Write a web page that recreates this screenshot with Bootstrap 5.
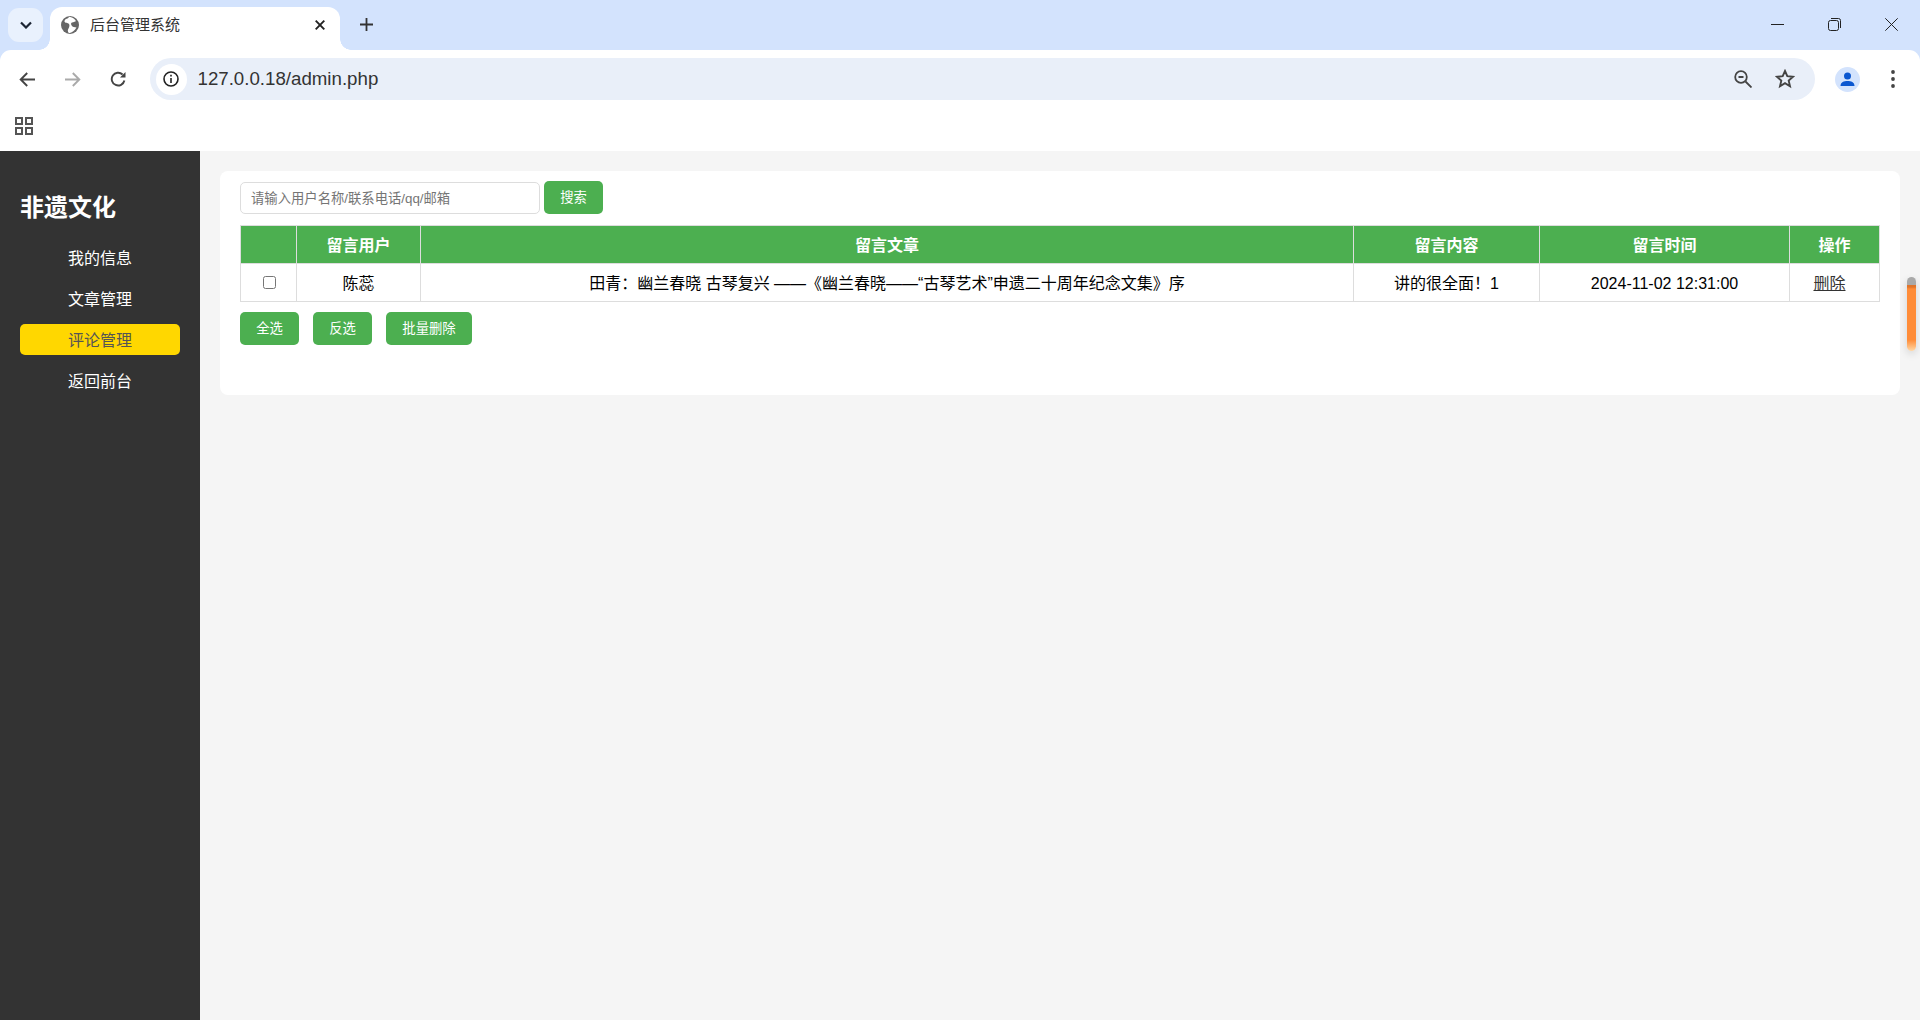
<!DOCTYPE html>
<html lang="zh">
<head>
<meta charset="utf-8">
<title>后台管理系统</title>
<link href="https://cdn.jsdelivr.net/npm/bootstrap@5.3.0/dist/css/bootstrap.min.css" rel="stylesheet">
<style>
html,body{height:100%;margin:0;overflow:hidden}
body{font-family:"Liberation Sans","Noto Sans CJK SC",sans-serif;background:#f5f5f5;color:#000}
.shell{height:1020px}
.chromebar{background:#d3e3fd;flex-shrink:0}
.tabstrip{height:50px;position:relative;padding-left:8px}
.tabmenu{width:35px;height:34px;margin-top:8px;border-radius:11px;background:#e9f1fd}
.chrome-tab{width:290px;height:43px;margin-top:7px;margin-left:7px;background:#fff;border-radius:12px 12px 0 0;padding:0 0 7px 11px;font-size:15px;color:#333;position:relative}
.chrome-tab::before,.chrome-tab::after{content:"";position:absolute;bottom:0;width:11px;height:11px}
.chrome-tab::before{left:-11px;background:radial-gradient(circle at 0 0,#d3e3fd 10.5px,#fff 11px)}
.chrome-tab::after{right:-11px;background:radial-gradient(circle at 100% 0,#d3e3fd 10.5px,#fff 11px)}
.tabtitle{margin-left:11px;flex:1}
.tabclose{margin-right:15px}
.plusbtn{margin-left:20px;margin-bottom:1px}
.winbtns{margin-left:auto}
.winbtn{width:57px;height:49px}
.toolbar{height:58px;background:#fff;border-radius:11px 11px 0 0;padding:8px 0 8px 15px}
.navico{width:24px;margin-right:21.5px}
.omni{width:1665px;height:42px;margin-left:-2px;background:#e9eff9;border-radius:21px;padding-left:6px;font-size:18.7px;color:#333}
.infoc{width:31px;height:31px;border-radius:50%;background:#fff;margin-right:11px}
.omni-r{margin-left:auto;margin-right:20px;gap:23px}
.avatar{width:25px;height:25px;border-radius:50%;background:#d3e3fd;margin-left:20.5px}
.dots{margin-left:29.5px}
.bmbar{height:43px;background:#fff;padding:9px 0 0 15px}
.mainrow{flex:1;min-height:0;position:relative}
.sidenav{width:200px;background:#333;color:#fff;padding:39px 20px 0}
.sidetitle{font-size:24px;font-weight:700;line-height:36px;margin:0 0 16px}
.sidelink{display:block;height:31px;line-height:33px;margin-bottom:10px;padding-left:48px;font-size:16px;color:#fff;text-decoration:none;border-radius:5px}
.sidelink.on{background:#ffd700;color:#555}
.content{flex:1;min-width:0;padding:20px 20px 0}
.panel{background:#fff;border-radius:8px;height:224px;padding:10px 20px}
.srch{height:33px}
.srch input{width:300px;height:32px;margin-top:1px;border:1px solid #ddd;border-radius:5px;padding:0 10px;font-size:13.33px;outline:0;color:#333}
.srch input::placeholder{color:#757575}
.gbtn{background:#4caf50;color:#fff;border:0;border-radius:5px;height:33px;font-size:13.33px;padding:0;width:59px}
.gbtn:hover{background:#4caf50;color:#fff}
.gbtn.wide{width:86px}
.srch .gbtn{margin-left:4px}
.datatbl{table-layout:fixed;width:1639px;border-collapse:collapse;margin-top:11px;font-size:16px}
.datatbl th,.datatbl td{border:1px solid #ddd;text-align:center;vertical-align:middle;padding:2px 0 0}
.datatbl th{background:#4caf50;color:#fff;font-weight:700;height:38px}
.datatbl td{height:38px}
.datatbl input{width:13px;height:13px;margin:0 0 4px 2px;vertical-align:middle}
.datatbl a{color:#333}
.datatbl .opcell{padding-right:10px}
.bulk{margin-top:10px;gap:14px}
.thumb{position:absolute;right:4px;top:126px;width:9px;height:74px;border-radius:5px;background:linear-gradient(#a9a9a9 0,#a9a9a9 8px,#e0742a 8px,#e0742a 10px,#ff8c38 12px,#ff8c38 85%,#ffd9a8 100%);box-shadow:0 3px 8px rgba(0,0,0,.14)}
</style>
</head>
<body>
<div class="shell d-flex flex-column">
  <div class="chromebar">
    <div class="tabstrip d-flex align-items-start">
      <div class="tabmenu d-flex align-items-center justify-content-center">
        <svg width="12" height="8" viewBox="0 0 12 8"><path d="M1 1.500l5 5 5-5" fill="none" stroke="#1b2433" stroke-width="2.200"/></svg>
      </div>
      <div class="chrome-tab d-flex align-items-center">
        <svg width="18" height="18" viewBox="0 0 18 18"><circle cx="9" cy="9" r="9" fill="#666"/><path d="M8 .8C7.500 3 4 2.500 3.500 5 3.200 7 6 6.500 7.500 7.500S8.500 11 7.500 12.500 6.500 15.500 8 17.200c3-.3 6-2.700 7.500-5.700-2-.7-3.500-.2-4.500-1.500S9.500 7 11 6.500s4-.5 3.800-1.700C13.500 2.500 11 1 8 .8z" fill="#fff"/></svg>
        <span class="tabtitle">后台管理系统</span>
        <svg class="tabclose" width="10" height="10" viewBox="0 0 10 10"><path d="M.7.700l8.600 8.600M9.300.700L.7 9.300" stroke="#222" stroke-width="1.900"/></svg>
      </div>
      <div class="plusbtn align-self-center d-flex">
        <svg width="13" height="13" viewBox="0 0 13 13"><path d="M6.500 0v13M0 6.500h13" stroke="#333" stroke-width="1.800"/></svg>
      </div>
      <div class="winbtns d-flex">
        <div class="winbtn d-flex align-items-center justify-content-center"><svg width="13" height="13" viewBox="0 0 13 13"><path d="M0 6.500h13" stroke="#222" stroke-width="1"/></svg></div>
        <div class="winbtn d-flex align-items-center justify-content-center"><svg width="13" height="13" viewBox="0 0 13 13" fill="none" stroke="#222" stroke-width="1"><rect x=".5" y="2.500" width="10" height="10" rx="2"/><path d="M3 .5h7.500a2 2 0 0 1 2 2V10"/></svg></div>
        <div class="winbtn d-flex align-items-center justify-content-center"><svg width="13" height="13" viewBox="0 0 13 13"><path d="M.3.300l12.400 12.400M12.700.300L.3 12.700" stroke="#222" stroke-width="1"/></svg></div>
      </div>
    </div>
    <div class="toolbar d-flex align-items-center">
      <div class="navico d-flex justify-content-center"><svg width="16" height="15" viewBox="0 0 16 15" fill="none" stroke="#444" stroke-width="1.900"><path d="M16 7.500H2M8.200 1L1.700 7.500 8.200 14"/></svg></div>
      <div class="navico d-flex justify-content-center"><svg width="16" height="15" viewBox="0 0 16 15" fill="none" stroke="#aaa" stroke-width="1.900"><path d="M0 7.500h14M7.800 1l6.500 6.500L7.800 14"/></svg></div>
      <div class="navico d-flex justify-content-center"><svg width="16" height="16" viewBox="0 0 16 16" fill="none" stroke="#444" stroke-width="1.900"><path d="M14.400 9.500A6.400 6.400 0 1 1 12.600 3.500"/><path d="M15.500 1v5.500H10z" fill="#444" stroke="none"/></svg></div>
      <div class="omni d-flex align-items-center">
        <div class="infoc d-flex align-items-center justify-content-center">
          <svg width="16" height="16" viewBox="0 0 16 16" fill="none" stroke="#222" stroke-width="1.600"><circle cx="8" cy="8" r="7"/><path d="M8 7v5M8 3.800v1.800"/></svg>
        </div>
        <span>127.0.0.18/admin.php</span>
        <div class="omni-r d-flex align-items-center">
          <svg width="18" height="18" viewBox="0 0 18 18" fill="none" stroke="#444" stroke-width="1.800"><circle cx="7" cy="7" r="5.800"/><path d="M4.500 7h5M11.500 11.500l6 6"/></svg>
          <svg width="20" height="20" viewBox="0 0 20 20" fill="none" stroke="#444" stroke-width="1.900"><path d="M10 2l2.300 5.200 5.700.6-4.300 3.800 1.300 5.600-5-3-5 3 1.300-5.600L2 7.800l5.700-.6z"/></svg>
        </div>
      </div>
      <div class="avatar d-flex align-items-center justify-content-center">
        <svg width="17" height="17" viewBox="0 0 17 17" fill="#0b57d0"><circle cx="8.500" cy="5" r="3.500"/><path d="M1.500 15c0-4 3.500-5 7-5s7 1 7 5z"/></svg>
      </div>
      <div class="dots d-flex">
        <svg width="6" height="18" viewBox="0 0 6 18" fill="#444"><circle cx="3" cy="2" r="1.900"/><circle cx="3" cy="9" r="1.900"/><circle cx="3" cy="16" r="1.900"/></svg>
      </div>
    </div>
    <div class="bmbar d-flex align-items-start">
      <svg width="18" height="18" viewBox="0 0 18 18" fill="none" stroke="#555" stroke-width="2"><rect x="1" y="1" width="6" height="6"/><rect x="11" y="1" width="6" height="6"/><rect x="1" y="11" width="6" height="6"/><rect x="11" y="11" width="6" height="6"/></svg>
    </div>
  </div>
  <div class="mainrow d-flex">
    <nav class="sidenav flex-shrink-0">
      <h2 class="sidetitle">非遗文化</h2>
      <a class="sidelink" href="#">我的信息</a>
      <a class="sidelink" href="#">文章管理</a>
      <a class="sidelink on" href="#">评论管理</a>
      <a class="sidelink" href="#">返回前台</a>
    </nav>
    <main class="content">
      <div class="panel">
        <form class="srch d-flex align-items-start">
          <input type="text" placeholder="请输入用户名称/联系电话/qq/邮箱">
          <button type="button" class="btn gbtn">搜索</button>
        </form>
        <table class="datatbl">
          <colgroup><col style="width:56px"><col style="width:124px"><col style="width:933px"><col style="width:186px"><col style="width:250px"><col style="width:90px"></colgroup>
          <thead><tr><th></th><th>留言用户</th><th>留言文章</th><th>留言内容</th><th>留言时间</th><th>操作</th></tr></thead>
          <tbody><tr>
            <td><input type="checkbox"></td><td>陈蕊</td>
            <td>田青：幽兰春晓 古琴复兴 ——《幽兰春晓——“古琴艺术”申遗二十周年纪念文集》序</td>
            <td>讲的很全面！1</td><td>2024-11-02 12:31:00</td><td class="opcell"><a href="#">删除</a></td>
          </tr></tbody>
        </table>
        <div class="bulk d-flex">
          <button type="button" class="btn gbtn">全选</button>
          <button type="button" class="btn gbtn">反选</button>
          <button type="button" class="btn gbtn wide">批量删除</button>
        </div>
      </div>
    </main>
    <div class="thumb"></div>
  </div>
</div>
<script src="https://cdn.jsdelivr.net/npm/bootstrap@5.3.0/dist/js/bootstrap.bundle.min.js"></script>
</body>
</html>
